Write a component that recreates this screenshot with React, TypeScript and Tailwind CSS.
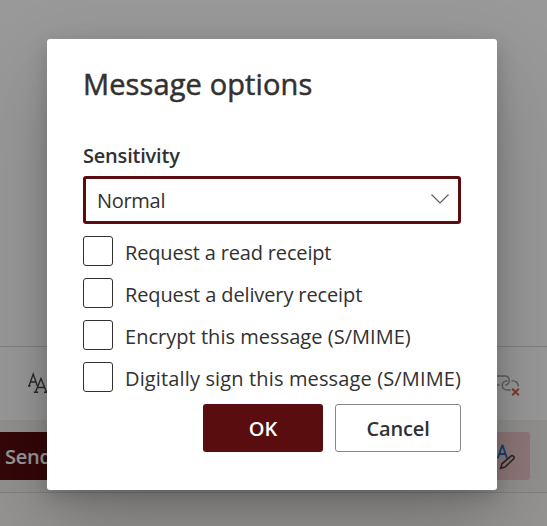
import React from 'react';

const options = [
  { label: 'Request a read receipt', tracking: 'tracking-[-0.17px]' },
  { label: 'Request a delivery receipt', tracking: 'tracking-[-0.12px]' },
  { label: 'Encrypt this message (S/MIME)', tracking: 'tracking-[0.03px]' },
  { label: 'Digitally sign this message (S/MIME)', tracking: 'tracking-[0.14px]' },
];

function FontSizeIcon() {
  return (
    <svg width="26" height="26" viewBox="0 0 26 26" fill="none" stroke="#484644" strokeWidth="1.4">
      <path d="M2 15 6.2 3 10.4 15M3.6 11H8.8M1 15H3.6" />
      <path d="M8.5 21 14 7.5 19.5 21M10.6 16.5H17.4M6.8 21.2H11.2M17 21.2H22" />
    </svg>
  );
}

function UnlinkIcon() {
  return (
    <svg width="26" height="26" viewBox="0 0 26 26" fill="none">
      <g stroke="#a19f9d" strokeWidth="1.5">
        <path d="M0 5H7.5C10.5 5 12.3 7 12.3 9.5S10.3 14 8.3 14M0 14H2.5" />
        <path d="M10.5 9.8C7.5 9.8 5.2 11.8 5.2 14.5S7.5 19 10.5 19H13.5" />
        <path d="M14.5 9.8C18.5 9.8 21.2 12 21.2 15.5" />
      </g>
      <path d="m15.2 17.8 6.6 6.4m0-6.4-6.6 6.4" stroke="#d9604c" strokeWidth="2" />
    </svg>
  );
}

function EditorIcon() {
  return (
    <svg width="24" height="30" viewBox="0 0 24 30" fill="none">
      <path d="M.8 17.2 5.1 4.6H5.7L10 17.2M2.2 13H8.5" stroke="#1b6ec2" strokeWidth="1.8" />
      <path d="m3.7 27.3 1.3-4.5 8.7-7.5a1.9 1.9 0 0 1 2.8 2.6L8 26.1l-4.3 1.2Z" stroke="#484644" strokeWidth="1.6" />
    </svg>
  );
}

function Composer() {
  return (
    <div className="flex h-full flex-col bg-white">
      <div className="h-[346px]" />
      <div className="flex h-[74px] items-center justify-between border-t border-[#d8d6d4] pr-6 pl-[27px]">
        <FontSizeIcon />
        <UnlinkIcon />
      </div>
      <div className="flex h-[73px] items-center justify-between border-b border-[#dddbd9] bg-[#f3f2f1] pr-[17px]">
        <div className="flex h-12 w-[90px] items-center bg-[#590d0f] pt-0.5 pl-[5px] text-[20px] font-semibold tracking-[-0.2px] text-white">Send</div>
        <div className="flex h-12 w-12 items-center justify-end rounded-[3px] bg-[#f0c9cb] pr-[9px]">
          <EditorIcon />
        </div>
      </div>
      <div className="flex-1 bg-[#f8f7f6]" />
    </div>
  );
}

export default function App() {
  return (
    <div className="relative h-[526px] w-[547px] overflow-hidden font-['Open_Sans','Noto_Sans',sans-serif] text-[#323130]">
      <Composer />
      <div className="absolute inset-0 bg-black/40 pt-[39px] pl-[47px]">
        <div className="flex h-[451px] w-[450px] flex-col rounded-[3px] bg-white px-9 shadow-[0_38px_86px_rgba(0,0,0,0.22),0_7px_22px_rgba(0,0,0,0.18)]">
          <h1 className="mt-[24px] text-[29px] leading-[42px] tracking-[0.12px] whitespace-nowrap [-webkit-text-stroke:0.5px_#323130]">Message options</h1>
          <label className="mt-[36px] text-[20px] leading-[30px] font-semibold tracking-[-0.2px]">Sensitivity</label>
          <div className="mt-[5px] flex h-12 items-center justify-between rounded-[3px] border-3 border-[#590d0f] pr-2 pl-[11px]">
            <span className="pt-px text-[20px] leading-[30px] tracking-[-0.3px]">Normal</span>
            <svg width="20" height="12" viewBox="0 0 20 12" fill="none" stroke="#605e5c" strokeWidth="1.2" className="mb-[3px]">
              <path d="m1.5 1.5 8.5 8.5 8.5-8.5" />
            </svg>
          </div>
          <div className="mt-3 flex flex-col gap-3">
            {options.map((o) => (
              <div key={o.label} className="flex h-[30px] items-center gap-3">
                <div className="size-[30px] shrink-0 rounded-[3px] border border-[#323130]" />
                <span className={`pt-[3px] text-[20px] leading-[30px] whitespace-nowrap ${o.tracking}`}>{o.label}</span>
              </div>
            ))}
          </div>
          <div className="mt-3 flex justify-end gap-3">
            <button className="h-12 w-[120px] rounded-[3px] bg-[#590d0f] pt-px text-[20px] font-semibold text-white">OK</button>
            <button className="h-12 w-[126px] rounded-[3px] border border-[#8a8886] pt-px text-[20px] font-semibold tracking-[-0.15px]">Cancel</button>
          </div>
        </div>
      </div>
    </div>
  );
}
